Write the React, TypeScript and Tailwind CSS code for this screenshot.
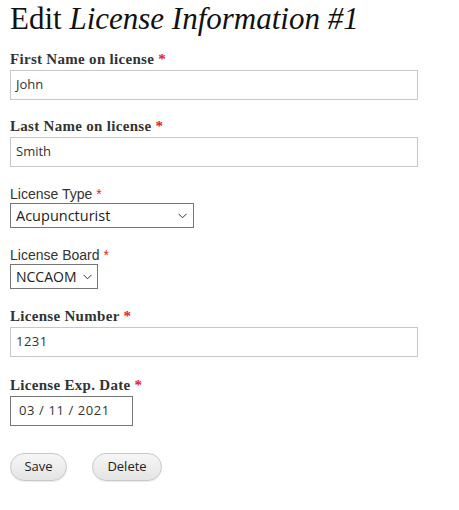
import React from "react";

const serif = { fontFamily: '"Liberation Serif", "DejaVu Serif", serif' };

function Req() {
  return <span className="text-[#e0222c]"> *</span>;
}

function Chevron() {
  return (
    <svg width="9" height="6" viewBox="0 0 9 6" className="shrink-0">
      <path d="M0.5 0.8 L4.5 4.8 L8.5 0.8" fill="none" stroke="#333" strokeWidth="1" />
    </svg>
  );
}

function SerifLabel({ children, mt }: { children: React.ReactNode; mt: string }) {
  return (
    <div className={`${mt} text-[15px] leading-[18px] font-bold tracking-[0.3px] text-[#333]`} style={serif}>
      {children}
      <Req />
    </div>
  );
}

export default function App() {
  return (
    <div className="bg-white w-[459px] h-[510px] px-[10px] text-[#333]">
      <h1 className="text-[31px] leading-[38px] text-[#111] whitespace-nowrap" style={serif}>
        Edit <i>License Information #1</i>
      </h1>

      <SerifLabel mt="mt-[12px]">First Name on license</SerifLabel>
      <div className="mt-[2px] w-[408px] h-[30px] border border-[#c8c8c8] flex items-center pl-[5px] text-[13px] font-['Open_Sans',sans-serif]">
        John
      </div>

      <SerifLabel mt="mt-[17px]">Last Name on license</SerifLabel>
      <div className="mt-[2px] w-[408px] h-[30px] border border-[#c8c8c8] flex items-center pl-[5px] text-[13px] font-['Open_Sans',sans-serif]">
        Smith
      </div>

      <div className="mt-[18px] text-[14px] leading-[18px] font-['Liberation_Sans',Arial,sans-serif]">
        License Type<Req />
      </div>
      <div className="w-[184px] h-[25px] border border-[#767676] flex items-center justify-between pl-[5px] pr-[6px] text-[14.5px] text-[#222] font-['Open_Sans',sans-serif]">
        <span>Acupuncturist</span>
        <Chevron />
      </div>

      <div className="mt-[18px] text-[14px] leading-[18px] font-['Liberation_Sans',Arial,sans-serif]">
        License Board<Req />
      </div>
      <div className="w-[88px] h-[25px] border border-[#767676] flex items-center justify-between pl-[5px] pr-[5px] text-[14px] text-[#222] font-['Open_Sans',sans-serif]">
        <span>NCCAOM</span>
        <Chevron />
      </div>

      <SerifLabel mt="mt-[18px]">License Number</SerifLabel>
      <div className="mt-[2px] w-[408px] h-[30px] border border-[#c8c8c8] flex items-center pl-[5px] text-[13px] tracking-[0.5px] font-['Open_Sans',sans-serif]">
        1231
      </div>

      <SerifLabel mt="mt-[19px]">License Exp. Date</SerifLabel>
      <div className="mt-[2px] w-[123px] h-[30px] border border-[#767676] flex items-center pl-[8px] text-[13px] tracking-[0.6px] font-['Open_Sans',sans-serif]">
        03 / 11 / 2021
      </div>

      <div className="mt-[27px] flex gap-[25px] font-['Open_Sans',sans-serif] text-[13px] text-[#222]">
        <button className="w-[57px] h-[28px] rounded-full border border-[#c8c8c8] bg-gradient-to-b from-[#f6f6f6] to-[#e4e4e4] shadow-[0_1px_1px_rgba(0,0,0,0.08)]">
          Save
        </button>
        <button className="w-[70px] h-[28px] rounded-full border border-[#c8c8c8] bg-gradient-to-b from-[#f6f6f6] to-[#e4e4e4] shadow-[0_1px_1px_rgba(0,0,0,0.08)]">
          Delete
        </button>
      </div>
    </div>
  );
}
